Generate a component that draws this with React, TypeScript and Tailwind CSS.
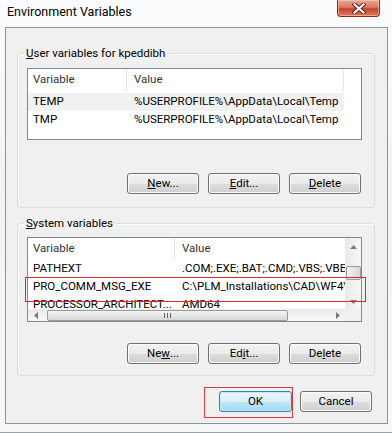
import React from "react";

function Btn({ children, def = false, wide = false }: { children: React.ReactNode; def?: boolean; wide?: boolean }) {
  return (
    <div
      className={`${wide ? "w-[73px]" : "w-[72px]"} h-[21px] rounded-[3px] border flex items-center justify-center text-[11.5px] text-black ${
        def
          ? "border-[#3c7fb1] bg-[linear-gradient(to_bottom,#eaf6fd_0%,#d9f0fc_50%,#bee6fd_51%,#a7d9f5_100%)] shadow-[inset_0_0_0_1px_#c5e9fb]"
          : "border-[#707070] bg-[linear-gradient(to_bottom,#f2f2f2_0%,#ebebeb_50%,#dddddd_51%,#cfcfcf_100%)] shadow-[inset_0_0_0_1px_#fbfbfb]"
      }`}
    >
      {children}
    </div>
  );
}

function Arrow({ dir }: { dir: "up" | "down" | "left" | "right" }) {
  const pts =
    dir === "up" ? "0,4 3.5,0 7,4" : dir === "down" ? "0,0 3.5,4 7,0" : dir === "left" ? "4,0 0,3.5 4,7" : "0,0 4,3.5 0,7";
  const w = dir === "up" || dir === "down" ? 7 : 4;
  const h = dir === "up" || dir === "down" ? 4 : 7;
  return (
    <svg width={w} height={h} viewBox={`0 0 ${w} ${h}`}>
      <polygon points={pts} fill="#7a7a7a" />
    </svg>
  );
}

function GroupBox({ label, children, className }: { label: React.ReactNode; children: React.ReactNode; className: string }) {
  return (
    <fieldset className={`border border-[#d5dfe5] rounded-[3px] shadow-[inset_1px_1px_0_#ffffff] ${className}`}>
      <legend className="ml-[6px] px-[2px] text-[11.5px] leading-[16px] text-black bg-[#f0f0f0]">{label}</legend>
      {children}
    </fieldset>
  );
}

export default function App() {
  return (
    <div className="w-[392px] h-[433px] flex flex-col bg-[linear-gradient(to_bottom,#fbfcfd_0%,#f1f3f6_40%,#f5f6f8_100%)] font-[family-name:Roboto,'Liberation_Sans',sans-serif] overflow-hidden">
      {/* Title bar */}
      <div className="h-[27px] flex justify-between shrink-0">
        <div className="pl-[7px] pt-[4px] text-[12.5px] text-black leading-[16px]">Environment Variables</div>
        <div className="mr-[12px] w-[43px] h-[17px] rounded-b-[4px] border border-t-0 border-[#8b2a1e] bg-[linear-gradient(to_bottom,#eaa696_0%,#d97a64_45%,#c7432c_55%,#dc7a60_100%)] shadow-[inset_0_0_0_1px_rgba(255,220,210,0.5)] flex items-center justify-center">
          <svg width="14" height="11" viewBox="0 0 14 11">
            <path d="M2.5 1.5 L11.5 9.5 M11.5 1.5 L2.5 9.5" stroke="#5a1a10" strokeWidth="4" strokeLinecap="square" />
            <path d="M2.5 1.5 L11.5 9.5 M11.5 1.5 L2.5 9.5" stroke="#ffffff" strokeWidth="2.2" strokeLinecap="square" />
          </svg>
        </div>
      </div>

      {/* Client area */}
      <div className="ml-[5px] w-[383px] h-[397px] border border-[#8d939a] bg-[#f0f0f0] flex flex-col shrink-0">
        <GroupBox
          className="mt-[17px] ml-[11px] w-[358px] pb-[13px]"
          label={
            <>
              <span className="underline">U</span>ser variables for kpeddibh
            </>
          }
        >
          <div className="ml-[9px] mt-[7px] w-[335px] h-[72px] border border-[#828790] bg-white overflow-hidden text-[11.5px]">
            <div className="flex h-[22px] text-[#333]">
              <div className="w-[99px] pl-[5px] flex items-center border-r border-[#e5e5e5]">Variable</div>
              <div className="w-[217px] pl-[7px] flex items-center border-r border-[#e5e5e5]">Value</div>
            </div>
            <div className="mt-[2px] flex h-[18px] w-[316px] items-center bg-[#f1f1f1] text-black">
              <div className="w-[99px] pl-[5px]">TEMP</div>
              <div className="pl-[7px] whitespace-nowrap">%USERPROFILE%\AppData\Local\Temp</div>
            </div>
            <div className="flex h-[18px] w-[316px] items-center text-black">
              <div className="w-[99px] pl-[5px]">TMP</div>
              <div className="pl-[7px] whitespace-nowrap">%USERPROFILE%\AppData\Local\Temp</div>
            </div>
          </div>
          <div className="mt-[33px] pl-[109px] flex gap-[9px]">
            <Btn>
              <span className="underline">N</span>ew...
            </Btn>
            <Btn>
              <span className="underline">E</span>dit...
            </Btn>
            <Btn>
              <span className="underline">D</span>elete
            </Btn>
          </div>
        </GroupBox>

        <GroupBox
          className="mt-[7px] ml-[11px] w-[358px] pb-[11px]"
          label={
            <>
              <span className="underline">S</span>ystem variables
            </>
          }
        >
          <div className="relative ml-[9px] mt-[6px] w-[335px] h-[85px]">
            <div className="w-full h-full border border-[#828790] bg-white flex flex-col overflow-hidden text-[11.5px]">
              <div className="flex h-[71px]">
                <div className="w-[317px] overflow-hidden">
                  <div className="flex h-[22px] text-[#333]">
                    <div className="w-[147px] shrink-0 pl-[5px] flex items-center border-r border-[#e5e5e5]">Variable</div>
                    <div className="flex-1 pl-[7px] flex items-center">Value</div>
                  </div>
                  <div className="flex h-[18px] items-center text-black whitespace-nowrap">
                    <div className="w-[147px] shrink-0 pl-[5px]">PATHEXT</div>
                    <div className="pl-[7px]">.COM;.EXE;.BAT;.CMD;.VBS;.VBE;.JS;.JSE;.WSF;.WSH;.MSC</div>
                  </div>
                  <div className="flex h-[18px] items-center text-black whitespace-nowrap">
                    <div className="w-[147px] shrink-0 pl-[5px]">PRO_COMM_MSG_EXE</div>
                    <div className="pl-[7px]">C:\PLM_Installations\CAD\WF4\x86e_win64\obj\pro_comm_msg.exe</div>
                  </div>
                  <div className="flex h-[17px] items-center text-black whitespace-nowrap">
                    <div className="w-[147px] shrink-0 pl-[5px]">PROCESSOR_ARCHITECT...</div>
                    <div className="pl-[7px]">AMD64</div>
                  </div>
                </div>
                {/* vertical scrollbar */}
                <div className="w-[16px] flex flex-col items-center bg-[linear-gradient(to_right,#eaeaea,#f7f7f7)] border-l border-[#ececec]">
                  <div className="h-[17px] flex items-center justify-center">
                    <Arrow dir="up" />
                  </div>
                  <div className="mt-[11px] w-[15px] h-[14px] rounded-[2px] border border-[#9a9a9a] bg-[linear-gradient(to_right,#f3f3f3,#d8d8d8)]" />
                  <div className="flex-1" />
                  <div className="h-[14px] flex items-center justify-center">
                    <Arrow dir="down" />
                  </div>
                </div>
              </div>
              {/* horizontal scrollbar */}
              <div className="flex h-[12px]">
                <div className="w-[317px] flex items-center bg-[linear-gradient(to_bottom,#eaeaea,#f7f7f7)]">
                  <div className="w-[16px] flex justify-center">
                    <Arrow dir="left" />
                  </div>
                  <div className="ml-[3px] w-[241px] h-[11px] rounded-[2px] border border-[#9a9a9a] bg-[linear-gradient(to_bottom,#f3f3f3,#d8d8d8)] flex items-center justify-center gap-[2px]">
                    <div className="w-[1px] h-[5px] bg-[#666]" />
                    <div className="w-[1px] h-[5px] bg-[#666]" />
                    <div className="w-[1px] h-[5px] bg-[#666]" />
                  </div>
                  <div className="flex-1 flex justify-end pr-[5px]">
                    <Arrow dir="right" />
                  </div>
                </div>
                <div className="flex-1 bg-[#f0f0f0]" />
              </div>
            </div>
            <div className="absolute z-10 left-[-1px] top-[41px] w-[339px] h-[23px] shadow-[0_0_0_1px_#e0282f]" />
          </div>
          <div className="mt-[21px] pl-[109px] flex gap-[9px]">
            <Btn>
              Ne<span className="underline">w</span>...
            </Btn>
            <Btn>
              Ed<span className="underline">i</span>t...
            </Btn>
            <Btn>
              De<span className="underline">l</span>ete
            </Btn>
          </div>
        </GroupBox>

        <div className="mt-[15px] flex justify-end gap-[8px] pr-[15px]">
          <div className="relative">
            <Btn def wide>
              OK
            </Btn>
            <div className="absolute left-[-15px] top-[-4px] w-[89px] h-[31px] border border-[#d9363e]" />
          </div>
          <Btn>Cancel</Btn>
        </div>
      </div>
      <div className="flex-1 border-b border-[#9aa0a8]" />
    </div>
  );
}
